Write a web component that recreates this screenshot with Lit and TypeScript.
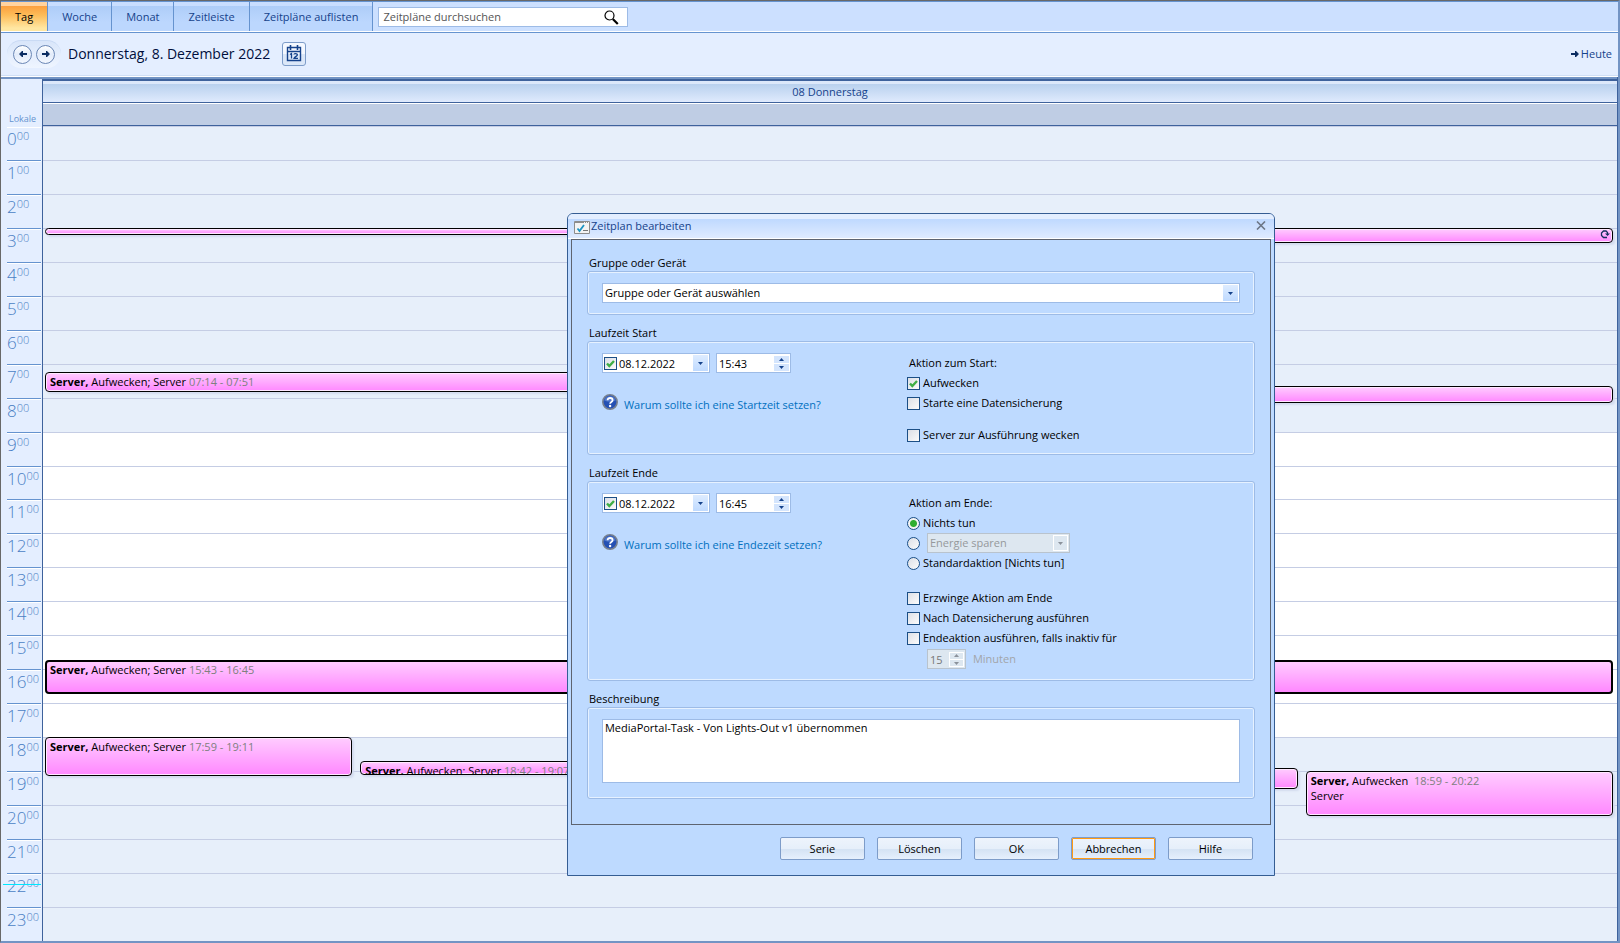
import { LitElement, html, css, svg, nothing } from "lit";
import { customElement, property, state } from "lit/decorators.js";
import { classMap } from "lit/directives/class-map.js";
import { styleMap } from "lit/directives/style-map.js";

interface CalendarEvent {
  start: string;
  end: string;
  column: number;
  columns: number;
  title?: string;
  detail?: string;
  second?: string;
  time?: string;
  selected?: boolean;
  recurring?: boolean;
}

const EVENTS: CalendarEvent[] = [
  { start: "03:00", end: "03:15", column: 0, columns: 2 },
  { start: "03:00", end: "03:29", column: 1, columns: 2, recurring: true },
  { start: "07:14", end: "07:51", column: 0, columns: 2, title: "Server,", detail: "Aufwecken; Server", time: "07:14 - 07:51" },
  { start: "07:40", end: "08:11", column: 1, columns: 2 },
  { start: "15:43", end: "16:45", column: 0, columns: 1, title: "Server,", detail: "Aufwecken; Server", time: "15:43 - 16:45", selected: true },
  { start: "17:59", end: "19:11", column: 0, columns: 5, title: "Server,", detail: "Aufwecken; Server", time: "17:59 - 19:11" },
  { start: "18:42", end: "19:08", column: 1, columns: 5, title: "Server,", detail: "Aufwecken; Server", time: "18:42 - 19:07" },
  { start: "18:55", end: "19:34", column: 3, columns: 5 },
  { start: "18:59", end: "20:21", column: 4, columns: 5, title: "Server,", detail: "Aufwecken", time: " 18:59 - 20:22", second: "Server" },
];

const hoursOf = (time: string) => {
  const [h, m] = time.split(":").map(Number);
  return h + m / 60;
};

const arrow = (flip: boolean) => html`
  <svg class="arrow" viewBox="0 0 8 8" width="8" height="8" aria-hidden="true">
    ${flip
      ? svg`<path d="M8 3v2H4v2H3L0 4 3 1h1v2z"/>`
      : svg`<path d="M0 3v2h4v2h1l3-3-3-3H4v2z"/>`}
  </svg>`;

const fontStack = css`
  font-family: "Open Sans", "Noto Sans", sans-serif;
  font-size: 11px;
  line-height: 16px;
`;

@customElement("top-bar")
export class TopBar extends LitElement {
  @state() private active = "Tag";

  static styles = css`
    :host { display: block; ${fontStack} }
    .tabs {
      display: flex;
      align-items: stretch;
      height: 30px;
      background: #cce0ff;
      border-top: 1px solid #6593cf;
      border-bottom: 1px solid #6593cf;
      box-shadow: inset 0 -1px #fff;
    }
    .tab {
      font: inherit;
      color: #15428b;
      border: 0;
      border-right: 1px solid #6593cf;
      padding: 0 14px;
      margin-bottom: 1px;
      background: linear-gradient(#c9deff 0 4px, #aecdf8 4px, #bcd7fe 70%);
    }
    .tab.active {
      color: #000;
      background: linear-gradient(#ffd3a0 0 4px, #fb9f3e 4px, #fdbc58 45%, #ffe7a2 90%);
    }
    .search {
      display: flex;
      align-items: center;
      box-sizing: border-box;
      width: 250px;
      height: 20px;
      margin: 5px 0 0 5px;
      padding-right: 8px;
      background: #fff;
      border: 1px solid #9dbbe6;
    }
    .search input {
      flex: 1;
      min-width: 0;
      font: inherit;
      border: 0;
      outline: 0;
      padding: 0 4px;
      background: none;
    }
    .search input::placeholder { color: #555; opacity: 1; }
    .nav {
      display: flex;
      align-items: center;
      height: 41px;
      padding: 0 6px 2px;
      background: #e4eeff;
      border-bottom: 1px solid #fff;
      box-shadow: inset 0 -1px #cfdff6;
    }
    .pager {
      display: flex;
      gap: 4px;
      padding: 4px 6px;
      border-radius: 15px;
      border-top: 1px solid #c9daf4;
      background: linear-gradient(#d9e6fa, #eff5ff);
    }
    .round {
      display: grid;
      place-items: center;
      width: 19px;
      height: 19px;
      padding: 0;
      border: 1px solid #6b87b5;
      border-radius: 50%;
      background: linear-gradient(#fff, #e3ecfa 50%, #f4f8ff);
    }
    .arrow { fill: #0b2c62; }
    .date { margin: 0 12px 0 7px; font-size: 14px; line-height: 22px; font-weight: 400; color: #000f3c; }
    .calendar {
      display: grid;
      place-items: center;
      width: 24px;
      height: 24px;
      padding: 0;
      border: 1px solid #7d9cc9;
      border-radius: 3px;
      background: linear-gradient(#f4f8ff 50%, #dbe7f8 50%);
    }
    .today { display: flex; align-items: center; gap: 2px; margin-left: auto; color: #15428b; text-decoration: none; }
  `;

  render() {
    return html`
      <nav class="tabs">
        ${["Tag", "Woche", "Monat", "Zeitleiste", "Zeitpläne auflisten"].map(
          (t) => html`<button class=${classMap({ tab: true, active: t === this.active })}
            @click=${() => (this.active = t)}>${t}</button>`
        )}
        <label class="search">
          <input type="text" placeholder="Zeitpläne durchsuchen" aria-label="Zeitpläne durchsuchen" />
          <svg width="15" height="15" viewBox="0 0 15 15" fill="none" stroke="#000" aria-hidden="true">
            <circle cx="5.5" cy="5.5" r="4.5" stroke-width="1.2" />
            <path d="M8.8 9l5 5" stroke-width="2.2" />
          </svg>
        </label>
      </nav>
      <div class="nav">
        <div class="pager">
          <button class="round" aria-label="Zurück">${arrow(true)}</button>
          <button class="round" aria-label="Weiter">${arrow(false)}</button>
        </div>
        <h1 class="date">Donnerstag, 8. Dezember 2022</h1>
        <button class="calendar" aria-label="Kalender">
          <svg width="16" height="17" viewBox="0 0 16 17" fill="none" stroke="#15428b" aria-hidden="true">
            <path d="M1.5 2.5h13v13h-13zM1 6.5h14" stroke-width="1.4" />
            <path d="M4.5 0v5M11.5 0v5" stroke-width="1.6" />
            <path d="M4 9.5l1.5-1v5M8 9.5c0-1.3 3.4-1.3 3.4.2 0 1.4-2.8 2.2-3.4 3.7h4" stroke-width="1.3" />
          </svg>
        </button>
        <a class="today" href="#heute">${arrow(false)}Heute</a>
      </div>
    `;
  }
}

@customElement("day-view")
export class DayView extends LitElement {
  @property({ attribute: false }) events: CalendarEvent[] = [];

  static styles = css`
    :host { display: flex; flex-direction: column; ${fontStack} }
    .head {
      display: grid;
      grid-template-columns: 41px 1fr;
      border-top: 2px solid #7394c4;
      background: #e4eeff;
    }
    .zone {
      display: flex;
      align-items: flex-end;
      padding: 0 0 0 8px;
      font-size: 9px;
      line-height: 14px;
      color: #6593cf;
    }
    .title-col { border-top: 2px solid #3e629c; border-left: 1px solid #3e629c; }
    .day {
      height: 21px;
      line-height: 21px;
      text-align: center;
      color: #15428b;
      background: linear-gradient(#dce8fa 0 3px, #b9d1ee 3px, #dfeafd);
      border-bottom: 1px solid #3e629c;
    }
    .all-day { height: 21px; background: #bfcde4; border-top: 1px solid #fff; border-bottom: 1px solid #3e629c; }
    .body { flex: 1; display: grid; grid-template-columns: 41px 1fr; min-height: 0; }
    .hours { position: relative; display: flex; flex-direction: column; background: #e4eeff; padding-left: 6px; }
    .hour {
      flex: 1;
      display: flex;
      align-items: flex-start;
      box-sizing: border-box;
      min-height: 0;
      margin-right: 1px;
      border-top: 1px solid #6593cf;
      box-shadow: inset 0 1px #fff;
      font-size: 17px;
      line-height: 24px;
      font-weight: 300;
      color: #4a7fc4;
    }
    .hour:first-of-type { border-top-color: transparent; }
    .hour sup { font-size: 11px; line-height: 17px; }
    .now { position: absolute; left: 2px; right: 1px; height: 1px; background: #00e8ff; }
    .canvas {
      position: relative;
      display: flex;
      flex-direction: column;
      border-left: 1px solid #3e629c;
      overflow: hidden;
    }
    .slot { flex: 1; box-sizing: border-box; min-height: 0; background: #e7effa; border-top: 1px solid #c5cde4; }
    .slot.work { background: #fff; }
    .event {
      position: absolute;
      box-sizing: border-box;
      overflow: hidden;
      padding: 1px 4px;
      line-height: 15px;
      border: 1px solid #000;
      border-radius: 4px;
      background: linear-gradient(#ffccff, #ff88ff);
      box-shadow: inset 0 0 0 1px #ffe8ff, 2px 2px 2px #d3dbee;
      color: #000;
      white-space: pre;
    }
    .event.selected { border-width: 2px; padding: 0 3px; box-shadow: none; }
    .time { color: #808080; }
    .repeat { position: absolute; right: 2px; top: 1px; }
  `;

  private renderEvent(e: CalendarEvent) {
    const start = hoursOf(e.start);
    const end = hoursOf(e.end);
    const place = {
      top: `${(start / 24) * 100}%`,
      height: `calc(${((end - start) / 24) * 100}% - 1px)`,
      left: `calc((100% + 2px) * ${e.column / e.columns} + 2px)`,
      width: `calc((100% + 2px) / ${e.columns} - 8px)`,
    };
    return html`<div class=${classMap({ event: true, selected: !!e.selected })} style=${styleMap(place)}>${e.title
        ? html`<b>${e.title}</b> ${e.detail} <span class="time">${e.time}</span>`
        : nothing}${e.second ? html`<div>${e.second}</div>` : nothing}${e.recurring
        ? html`<svg class="repeat" width="10" height="9" viewBox="0 0 10 9" aria-hidden="true">
            <path d="M7 7.500H3.500L1.500 5.500V3L3.500 1H6L7.500 2.500V4" fill="none" stroke="#15305e" stroke-width="1.300" />
            <path d="M5 3.500h5L7.500 6z" fill="#15305e" />
          </svg>`
        : nothing}</div>`;
  }

  render() {
    const hours = Array.from({ length: 24 }, (_, h) => h);
    return html`
      <div class="head">
        <div class="zone">Lokale</div>
        <div class="title-col">
          <div class="day">08 Donnerstag</div>
          <div class="all-day"></div>
        </div>
      </div>
      <div class="body">
        <div class="hours">
          ${hours.map((h) => html`<div class="hour">${h}<sup>00</sup></div>`)}
          <span class="now" style=${styleMap({ top: `${(22.33 / 24) * 100}%` })}></span>
        </div>
        <div class="canvas">
          ${hours.map((h) => html`<div class=${classMap({ slot: true, work: h >= 9 && h < 18 })}></div>`)}
          ${this.events.map((e) => this.renderEvent(e))}
        </div>
      </div>
    `;
  }
}

@customElement("schedule-dialog")
export class ScheduleDialog extends LitElement {
  static styles = css`
    :host {
      display: block;
      box-sizing: border-box;
      padding: 0 3px;
      border: 1px solid #355d93;
      border-radius: 6px 6px 0 0;
      background: #bedaff;
      color: #000;
      ${fontStack}
    }
    .title-bar {
      display: flex;
      align-items: center;
      height: 24px;
      margin: 0 -3px;
      padding: 0 7px 0 6px;
      border-bottom: 1px solid #fff;
      border-radius: 5px 5px 0 0;
      color: #15428b;
      background: linear-gradient(#e3eeff 0 5px, #bfd9ff 5px, #dfebff);
    }
    .title-bar h2 { flex: 1; margin: 0 0 1px 1px; font-size: inherit; font-weight: 400; }
    .close { display: grid; padding: 0 1px 1px 0; border: 0; background: none; }
    .app-icon { margin-top: 3px; }
    .panel {
      display: flex;
      flex-direction: column;
      gap: 10px;
      padding: 15px 15px 25px;
      border: 1px solid #5e6470;
    }
    fieldset { min-width: 0; margin: 0; padding: 0; border: 0; }
    legend { padding: 0 0 0 2px; }
    .box {
      padding: 11px 14px;
      border: 1px solid #9dbbe6;
      border-radius: 3px;
      box-shadow: inset 0 0 0 1px #e6f1ff;
    }
    .box.columns { display: grid; grid-template-columns: 305px 1fr; padding-bottom: 9px; }
    .box.columns.tall { padding-bottom: 11px; }
    .box.note { padding-bottom: 15px; }
    .field {
      display: flex;
      align-items: center;
      box-sizing: border-box;
      height: 20px;
      padding: 1px;
      border: 1px solid #9dbbe6;
      background: #fff;
    }
    .field input[type="text"], .field select {
      flex: 1;
      min-width: 0;
      height: 100%;
      font: inherit;
      color: inherit;
      padding: 0 0 0 1px;
      border: 0;
      outline: 0;
      background: none;
      appearance: none;
    }
    .drop {
      display: grid;
      place-items: center;
      width: 15px;
      height: 16px;
      padding: 0;
      border: 0;
      background: linear-gradient(#deecff, #bfdaff);
      pointer-events: none;
    }
    .spin { display: grid; gap: 1px; width: 15px; }
    .spin button {
      display: grid;
      place-items: center;
      height: 7px;
      padding: 0;
      border: 0;
      background: #d4e5fd;
    }
    svg.tri { fill: #15428b; }
    .disabled { color: #777; background: #dde7f0; border-color: #b9c3cd; }
    .disabled .drop, .disabled .spin button { background: #dde7f0; }
    .disabled .drop { outline: 1px solid #fff; outline-offset: -1px; }
    .disabled .spin { outline: 1px solid #fff; outline-offset: -1px; background: #fff; }
    .disabled svg.tri { fill: #8b929b; }
    .stamp { display: flex; gap: 6px; }
    .date { width: 108px; }
    .time { width: 75px; }
    .help { display: flex; gap: 6px; margin-top: 21px; }
    .help a { margin-top: 3px; color: #0070c0; text-decoration: none; }
    .options { display: flex; flex-direction: column; }
    .row { display: flex; align-items: center; gap: 3px; height: 20px; }
    .caption { padding-left: 2px; }
    .gap { margin-top: 12px; }
    .tall .gap { margin-top: 15px; }
    input[type="checkbox"], input[type="radio"] {
      flex: none;
      appearance: none;
      box-sizing: border-box;
      width: 13px;
      height: 13px;
      margin: 0;
      border: 1px solid #1c4f86;
      background: center / 9px 9px no-repeat, linear-gradient(135deg, #dcdfe6, #fbfbfb);
    }
    input[type="radio"] { border-radius: 50%; }
    input[type="checkbox"]:checked {
      background-image: url("data:image/svg+xml,%3Csvg xmlns='http://www.w3.org/2000/svg' viewBox='0 0 9 9'%3E%3Cpath d='M1 4.5l2.3 2.5L8 2' fill='none' stroke='%233fae45' stroke-width='2.4'/%3E%3C/svg%3E"), linear-gradient(135deg, #dcdfe6, #fbfbfb);
    }
    input[type="radio"]:checked { background: radial-gradient(circle, #2fae30 3px, #f3f3f3 4px); }
    .date input[type="checkbox"] { margin-right: 1px; }
    .energy { width: 143px; margin-left: 4px; }
    .minutes { margin: 1px 0 0 20px; gap: 7px; color: #a2a5aa; }
    .amount { width: 39px; }
    textarea {
      display: block;
      box-sizing: border-box;
      width: 100%;
      height: 64px;
      padding: 0 2px;
      border: 1px solid #9dbbe6;
      outline: 0;
      resize: none;
      font: inherit;
      color: #000;
    }
    .actions { display: flex; justify-content: flex-end; gap: 12px; padding: 12px 18px 15px; }
    .action {
      width: 85px;
      height: 23px;
      padding: 0;
      font: inherit;
      color: #000;
      border: 1px solid #7d9cc9;
      border-radius: 2px;
      background: linear-gradient(#eef4fc, #e6effa 50%, #d5e3f4 55%, #e6f0fd);
    }
    .action.focused { box-shadow: inset 0 0 0 1px #ff9a14; }
  `;

  private down() {
    return html`<svg class="tri" width="5" height="3" viewBox="0 0 5 3" aria-hidden="true"><path d="M0 0h5L2.5 3z" /></svg>`;
  }

  private spinner(disabled = false) {
    return html`<span class="spin">
      <button aria-label="Mehr" ?disabled=${disabled}><svg class="tri" width="5" height="3" viewBox="0 0 5 3" aria-hidden="true"><path d="M0 3h5L2.5 0z" /></svg></button>
      <button aria-label="Weniger" ?disabled=${disabled}>${this.down()}</button>
    </span>`;
  }

  private stamp(time: string, question: string, label: string) {
    return html`<div>
      <div class="stamp">
        <span class="field date">
          <input type="checkbox" checked aria-label="${label} aktiv" />
          <input type="text" .value=${"08.12.2022"} aria-label="${label} Datum" />
          <button class="drop" aria-label="Datum wählen">${this.down()}</button>
        </span>
        <span class="field time">
          <input type="text" .value=${time} aria-label="${label} Uhrzeit" />
          ${this.spinner()}
        </span>
      </div>
      <div class="help">
        <svg width="16" height="16" viewBox="0 0 16 16" aria-hidden="true">
          <circle cx="8" cy="8" r="7.2" fill="#2450b4" stroke="#77808f" stroke-width="1.6" />
          <path d="M2.3 6.5a6 6 0 0 1 11.4 0Q8 9 2.3 6.5z" fill="#6f92dc" opacity=".6" />
          <path d="M5.6 6.3c0-3.1 5-3 5 0 0 1.7-2.5 1.7-2.5 3.5" fill="none" stroke="#fff" stroke-width="1.8" />
          <circle cx="8.1" cy="12" r="1.2" fill="#fff" />
        </svg>
        <a href="#hilfe">${question}</a>
      </div>
    </div>`;
  }

  private check(text: string, checked = false, gap = false) {
    return html`<label class=${classMap({ row: true, gap })}>
      <input type="checkbox" ?checked=${checked} />${text}
    </label>`;
  }

  render() {
    return html`
      <div class="title-bar">
        <svg class="app-icon" width="16" height="13" viewBox="0 0 16 13" aria-hidden="true">
          <path d="M.5.5h15v12H.5z" fill="#f4f4f4" stroke="#8c8c8c" />
          <path d="M1 1.5h14" stroke="#8c8c8c" stroke-dasharray="9 1 1 1 1 1" />
          <path d="M3.5 7.5l2 2.5 4.500-6" fill="none" stroke="#1c94c4" stroke-width="1.8" />
          <path d="M9 9.5h5" stroke="#777" />
        </svg>
        <h2>Zeitplan bearbeiten</h2>
        <button class="close" aria-label="Schließen">
          <svg width="10" height="9" viewBox="0 0 10 9" aria-hidden="true"><path d="M1 .5l8 8M9 .5l-8 8" stroke="#6c7686" stroke-width="1.6" /></svg>
        </button>
      </div>
      <div class="panel">
        <fieldset>
          <legend>Gruppe oder Gerät</legend>
          <div class="box">
            <div class="field">
              <select aria-label="Gruppe oder Gerät"><option>Gruppe oder Gerät auswählen</option></select>
              <span class="drop">${this.down()}</span>
            </div>
          </div>
        </fieldset>
        <fieldset>
          <legend>Laufzeit Start</legend>
          <div class="box columns">
            ${this.stamp("15:43", "Warum sollte ich eine Startzeit setzen?", "Start")}
            <div class="options">
              <div class="row caption">Aktion zum Start:</div>
              ${this.check("Aufwecken", true)}
              ${this.check("Starte eine Datensicherung")}
              ${this.check("Server zur Ausführung wecken", false, true)}
            </div>
          </div>
        </fieldset>
        <fieldset>
          <legend>Laufzeit Ende</legend>
          <div class="box columns tall">
            ${this.stamp("16:45", "Warum sollte ich eine Endezeit setzen?", "Ende")}
            <div class="options">
              <div class="row caption">Aktion am Ende:</div>
              <label class="row"><input type="radio" name="ende" checked />Nichts tun</label>
              <div class="row">
                <input type="radio" name="ende" aria-label="Energie sparen" />
                <span class="field energy disabled">
                  <select disabled aria-label="Energieaktion"><option>Energie sparen</option></select>
                  <span class="drop">${this.down()}</span>
                </span>
              </div>
              <label class="row"><input type="radio" name="ende" />Standardaktion [Nichts tun]</label>
              ${this.check("Erzwinge Aktion am Ende", false, true)}
              ${this.check("Nach Datensicherung ausführen")}
              ${this.check("Endeaktion ausführen, falls inaktiv für")}
              <label class="row minutes">
                <span class="field amount disabled"><input type="text" disabled .value=${"15"} />${this.spinner(true)}</span>
                Minuten
              </label>
            </div>
          </div>
        </fieldset>
        <fieldset>
          <legend>Beschreibung</legend>
          <div class="box note">
            <textarea aria-label="Beschreibung" .value=${"MediaPortal-Task - Von Lights-Out v1 übernommen"}></textarea>
          </div>
        </fieldset>
      </div>
      <div class="actions">
        ${["Serie", "Löschen", "OK", "Abbrechen", "Hilfe"].map(
          (a) => html`<button class=${classMap({ action: true, focused: a === "Abbrechen" })}>${a}</button>`
        )}
      </div>
    `;
  }
}

@customElement("app-root")
export class AppRoot extends LitElement {
  static styles = css`
    :host {
      position: relative;
      display: flex;
      flex-direction: column;
      box-sizing: border-box;
      min-height: 100vh;
      border: solid #7394c4;
      border-width: 1px 2px 2px 1px;
      border-top-color: #686868;
      border-left-color: #686868;
      background: #e4eeff;
    }
    .view { flex: 1; border-right: 1px solid #3e629c; }
    .dialog { position: absolute; left: 35%; top: 212px; width: 708px; }
  `;

  render() {
    return html`
      <top-bar></top-bar>
      <day-view class="view" .events=${EVENTS}></day-view>
      <schedule-dialog class="dialog" role="dialog" aria-label="Zeitplan bearbeiten"></schedule-dialog>
    `;
  }
}
